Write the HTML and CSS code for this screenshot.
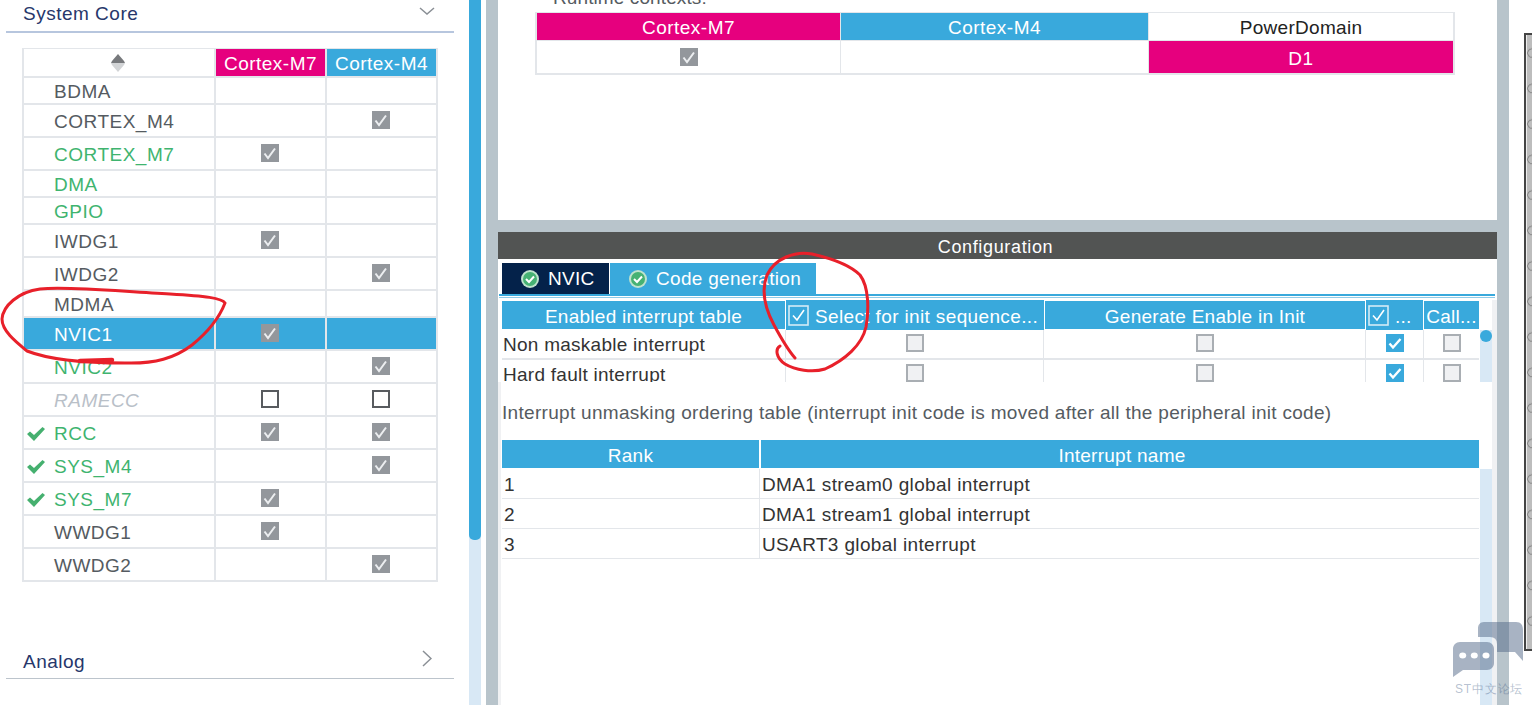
FILE: index.html
```html
<!DOCTYPE html>
<html lang="en">
<head>
  <meta charset="UTF-8">
  <title>Configuration</title>
  <link rel="stylesheet" href="styles.css">
</head>
<body>

  <div id="left-pane">
    <div class="section-head">
      <span>System Core</span>
      <svg class="chevron-down" viewBox="0 0 16 8"><polyline points="1,1 8,7 15,1"/></svg>
    </div>

    <div class="ip-table">
      <div class="cell sort-cell">
        <svg class="sort-icon" viewBox="0 0 14 18"><path class="sort-up" d="M7 0 L13 7 L14 9 L0 9 L1 7 Z"/><path class="sort-down" d="M0 9 L14 9 L13 11 L7 18 L1 11 Z"/></svg>
      </div>
      <div class="cell head-pink">Cortex-M7</div>
      <div class="cell head-blue">Cortex-M4</div>

      <div class="cell name"><i class="slot"></i>BDMA</div><div class="cell"></div><div class="cell"></div>

      <div class="cell name"><i class="slot"></i>CORTEX_M4</div><div class="cell"></div>
      <div class="cell"><svg class="box"><use href="#box-grey"/></svg></div>

      <div class="cell name green"><i class="slot"></i>CORTEX_M7</div>
      <div class="cell"><svg class="box"><use href="#box-grey"/></svg></div><div class="cell"></div>

      <div class="cell name green"><i class="slot"></i>DMA</div><div class="cell"></div><div class="cell"></div>
      <div class="cell name green"><i class="slot"></i>GPIO</div><div class="cell"></div><div class="cell"></div>

      <div class="cell name"><i class="slot"></i>IWDG1</div>
      <div class="cell"><svg class="box"><use href="#box-grey"/></svg></div><div class="cell"></div>

      <div class="cell name"><i class="slot"></i>IWDG2</div><div class="cell"></div>
      <div class="cell"><svg class="box"><use href="#box-grey"/></svg></div>

      <div class="cell name"><i class="slot"></i>MDMA</div><div class="cell"></div><div class="cell"></div>

      <div class="cell name selected"><i class="slot"></i>NVIC1</div>
      <div class="cell selected"><svg class="box"><use href="#box-grey"/></svg></div>
      <div class="cell selected"></div>

      <div class="cell name green"><i class="slot"></i>NVIC2</div><div class="cell"></div>
      <div class="cell"><svg class="box"><use href="#box-grey"/></svg></div>

      <div class="cell name disabled"><i class="slot"></i>RAMECC</div>
      <div class="cell"><i class="box-empty"></i></div>
      <div class="cell"><i class="box-empty"></i></div>

      <div class="cell name green"><i class="slot"><svg class="ok-mark"><use href="#ok"/></svg></i>RCC</div>
      <div class="cell"><svg class="box"><use href="#box-grey"/></svg></div>
      <div class="cell"><svg class="box"><use href="#box-grey"/></svg></div>

      <div class="cell name green"><i class="slot"><svg class="ok-mark"><use href="#ok"/></svg></i>SYS_M4</div>
      <div class="cell"></div>
      <div class="cell"><svg class="box"><use href="#box-grey"/></svg></div>

      <div class="cell name green"><i class="slot"><svg class="ok-mark"><use href="#ok"/></svg></i>SYS_M7</div>
      <div class="cell"><svg class="box"><use href="#box-grey"/></svg></div>
      <div class="cell"></div>

      <div class="cell name"><i class="slot"></i>WWDG1</div>
      <div class="cell"><svg class="box"><use href="#box-grey"/></svg></div><div class="cell"></div>

      <div class="cell name"><i class="slot"></i>WWDG2</div><div class="cell"></div>
      <div class="cell"><svg class="box"><use href="#box-grey"/></svg></div>
    </div>

    <div class="section-head analog">
      <span>Analog</span>
      <svg class="chevron-right" viewBox="0 0 10 17"><polyline points="1,1 9,8.5 1,16"/></svg>
    </div>
  </div>

  <div id="left-scroll"><div class="left-thumb"></div></div>
  <div class="gutter-white"></div>
  <div class="gutter-grey"></div>

  <div id="center-pane">
    <div class="top-panel">
      <div class="runtime-label"><span>Runtime contexts:</span></div>
      <div class="context-table">
        <div class="cell head-pink">Cortex-M7</div>
        <div class="cell head-blue">Cortex-M4</div>
        <div class="cell plain">PowerDomain</div>
        <div class="cell"><svg class="box"><use href="#box-grey"/></svg></div>
        <div class="cell"></div>
        <div class="cell head-pink">D1</div>
      </div>
    </div>

    <div class="splitter"></div>
    <div class="config-bar">Configuration</div>

    <div class="tabs">
      <div class="tab tab-active"><svg class="tab-icon"><use href="#tab-ok"/></svg>NVIC</div>
      <div class="tab"><svg class="tab-icon"><use href="#tab-ok"/></svg>Code generation</div>
    </div>
    <div class="tab-rule"></div>

    <div class="config-body">
      <div class="nvic-head">
        <div class="th">Enabled interrupt table</div>
        <div class="th th-tall th-select"><svg class="head-box"><use href="#box-head"/></svg>Select for init sequence...</div>
        <div class="th">Generate Enable in Init</div>
        <div class="th th-tall"><svg class="head-box"><use href="#box-head"/></svg>...</div>
        <div class="th">Call...</div>
      </div>

      <div class="nvic-wrap">
        <div class="nvic-rows">
          <div class="td td-text">Non maskable interrupt</div>
          <div class="td"><i class="box-off"></i></div>
          <div class="td"><i class="box-off"></i></div>
          <div class="td"><svg class="box"><use href="#box-blue"/></svg></div>
          <div class="td"><i class="box-off"></i></div>

          <div class="td td-text">Hard fault interrupt</div>
          <div class="td"><i class="box-off"></i></div>
          <div class="td"><i class="box-off"></i></div>
          <div class="td"><svg class="box"><use href="#box-blue"/></svg></div>
          <div class="td"><i class="box-off"></i></div>
        </div>
        <div class="nvic-scroll"><div class="nvic-thumb"></div></div>
      </div>

      <div class="lower">
        <p class="order-title">Interrupt unmasking ordering table (interrupt init code is moved after all the peripheral init code)</p>
        <div class="rank-head">
          <div class="th">Rank</div>
          <div class="th">Interrupt name</div>
        </div>
        <div class="rank-wrap">
          <div class="rank-rows">
            <div class="td td-text">1</div><div class="td td-text">DMA1 stream0 global interrupt</div>
            <div class="td td-text">2</div><div class="td td-text">DMA1 stream1 global interrupt</div>
            <div class="td td-text">3</div><div class="td td-text">USART3 global interrupt</div>
          </div>
          <div class="rank-scroll"></div>
        </div>
      </div>
    </div>
  </div>

  <div class="gutter-grey right"></div>
  <div class="gutter-gap"></div>
  <div class="side-strip"></div>

  <!-- hand drawn marks on top of the screenshot -->
  <svg class="scribble" viewBox="0 0 1532 705">
    <path d="M225 303 C222 298 205 296 170 294 C125 292 70 286 40 289 C18 292 3 306 2 319 C2 331 16 342 27 351 C50 360 85 363 125 363 C155 364 175 358 192 345 C208 332 220 316 225 303"/>
    <path class="thick" d="M80 361 L112 360"/>
    <path d="M795 358 C788 350 781 338 774 325 C766 310 760 293 767 275 C775 258 795 251 812 254 C830 258 850 265 860 275 C869 287 869 310 866 327 C862 345 845 360 825 369 C812 373 795 370 785 364 C776 358 775 349 780 346"/>
  </svg>

  <div class="watermark">
    <svg class="bubbles" viewBox="0 0 71 56">
      <path class="bubble" d="M31 0 L63 0 C68 0 70 3 70 8 L70 39 L62 30 L44 30 L44 22 Q44 15 37 15 L25 15 L25 6 C25 3 27 0 31 0 Z"/>
      <path class="bubble" d="M7 20 L34 20 C38 20 41 23 41 27 L41 41 C41 45 38 48 34 48 L10 48 L0 55 L0 27 C0 23 3 20 7 20 Z"/>
      <ellipse class="dot" cx="9.700" cy="33.500" rx="3.500" ry="3"/><ellipse class="dot" cx="21.300" cy="33.500" rx="3.500" ry="3"/><ellipse class="dot" cx="33" cy="33.500" rx="3.500" ry="3"/>
    </svg>
    <span>ST中文论坛</span>
  </div>

  <svg class="sprite">
    <defs>
      <symbol id="box-grey" viewBox="0 0 18 18">
        <rect width="18" height="18" fill="#93979c"/>
        <polyline points="3.500,9.500 7,14 14,4.500" fill="none" stroke="#eceef0" stroke-width="2"/>
      </symbol>
      <symbol id="box-blue" viewBox="0 0 18 18">
        <rect width="18" height="18" fill="#39a9dc"/>
        <polyline points="3.500,9.500 7,13.500 14.500,5" fill="none" stroke="#fff" stroke-width="2.400"/>
      </symbol>
      <symbol id="box-head" viewBox="0 0 21 21">
        <rect x="1" y="1" width="19" height="19" fill="none" stroke="#d4ecf7" stroke-width="1.600"/>
        <polyline points="5,10.500 9,15 16,5" fill="none" stroke="#fff" stroke-width="1.600"/>
      </symbol>
      <symbol id="ok" viewBox="0 0 18 14">
        <path d="M0 7 L3 4.500 L7 8 L15.500 0 L18 2 L7 14 Z" fill="#45b06f"/>
      </symbol>
      <symbol id="tab-ok" viewBox="0 0 18 18">
        <circle cx="9" cy="9" r="9" fill="#bfe3cc"/>
        <circle cx="9" cy="9" r="7" fill="#46b273"/>
        <polyline points="5,9 8,12 13,6.500" fill="none" stroke="#fff" stroke-width="2"/>
      </symbol>
    </defs>
  </svg>

</body>
</html>
```

FILE: styles.css
```css
* {
  margin: 0;
  padding: 0;
  box-sizing: border-box;
}

body {
  width: 1532px;
  height: 705px;
  display: flex;
  overflow: hidden;
  background: #fff;
  font-family: "Liberation Sans", Arial, sans-serif;
  font-size: 19px;
  letter-spacing: .5px;
  color: #555b61;
}

/* left pane */

#left-pane {
  width: 469px;
  height: 705px;
  flex: none;
}

.section-head {
  width: 448px;
  height: 33px;
  margin-left: 6px;
  padding: 0 19px 3px 17px;
  display: flex;
  justify-content: space-between;
  align-items: center;
  border-bottom: 2px solid #b7c6de;
  color: #27376b;
}

.section-head.analog {
  height: 34px;
  margin-top: 63px;
  padding-bottom: 0;
  border-bottom: 1px solid #bcc4cc;
}

.chevron-down {
  width: 16px;
  height: 8px;
  margin-bottom: 6px;
  fill: none;
  stroke: #8a8f95;
  stroke-width: 1.500;
}

.chevron-right {
  width: 10px;
  height: 17px;
  margin: 0 3px 7px 0;
  fill: none;
  stroke: #8a8f95;
  stroke-width: 1.500;
}

.ip-table {
  width: 416px;
  margin: 15px 0 0 22px;
  padding: 1px 2px 2px;
  display: grid;
  grid-template-columns: 190px 109px 109px;
  grid-template-rows: 27px 25px 31px 31px 25px 25px 31px 31px 25px repeat(8, 31px);
  gap: 2px;
  background: #e3e6ea;
}

.cell {
  display: flex;
  justify-content: center;
  align-items: center;
  background: #fff;
}

.head-pink,
.head-blue {
  padding-top: 3px;
  color: #fff;
}

.head-pink {
  background: #e6007e;
}

.head-blue {
  background: #39a9dc;
}

.sort-icon {
  width: 14px;
  height: 18px;
  margin-right: 2px;
}

.sort-up {
  fill: #77797c;
}

.sort-down {
  fill: #d2d4d6;
}

.name {
  justify-content: flex-start;
  padding: 2px 0 0 3px;
}

.green {
  color: #3fb46f;
}

.disabled {
  color: #b9c0c8;
  font-style: italic;
}

.selected {
  background: #39a9dc;
  color: #fff;
}

.slot {
  width: 27px;
  display: flex;
  flex: none;
}

.ok-mark {
  width: 18px;
  height: 14px;
}

.box {
  width: 18px;
  height: 18px;
  display: block;
}

.box-empty {
  width: 18px;
  height: 18px;
  display: block;
  background: #fff;
  border: 2px solid #585b5f;
}

.ip-table .box,
.ip-table .box-empty {
  margin: 0 1px 1px 0;
}

/* scrollbars and gutters */

#left-scroll {
  width: 12px;
  flex: none;
  background: #d8e8f5;
}

.left-thumb {
  height: 540px;
  background: #39a9dc;
  border-radius: 0 0 5px 5px;
}

.gutter-white {
  width: 5px;
  flex: none;
}

.gutter-grey {
  width: 12px;
  flex: none;
  background: #b8c4cb;
}

.gutter-gap {
  width: 15px;
  flex: none;
}

.side-strip {
  width: 8px;
  height: 618px;
  margin-top: 33px;
  flex: none;
  border: 2px solid #444;
  border-right: none;
  background: radial-gradient(circle at 6px 18px, transparent 3.500px, #888 4px, #888 4.500px, transparent 5px) 0 0 / 8px 35.500px #bdbdbd;
  box-shadow: inset 1px 0 #eee;
}

/* center pane */

#center-pane {
  width: 999px;
  height: 705px;
  flex: none;
  overflow: hidden;
}

.top-panel {
  height: 220px;
}

.runtime-label {
  height: 12px;
  padding-left: 55px;
  line-height: 18px;
  letter-spacing: .1px;
  overflow: hidden;
}

.runtime-label span {
  display: block;
  margin-top: -11px;
}

.context-table {
  width: 920px;
  margin-left: 37px;
  padding: 1px 2px 2px;
  display: grid;
  grid-template-columns: 303px 307px 304px;
  grid-template-rows: 27px 32px;
  gap: 1px;
  background: #e3e6ea;
}

.plain {
  padding-top: 3px;
  color: #222;
  letter-spacing: .3px;
}

.splitter {
  height: 12px;
  background: #b8c4cb;
}

.config-bar {
  height: 27px;
  padding: 3px 4px 0 0;
  display: flex;
  justify-content: center;
  align-items: center;
  background: #525453;
  color: #fff;
  font-size: 18px;
  letter-spacing: .65px;
}

.tabs {
  height: 31px;
  margin-top: 4px;
  padding-left: 4px;
  display: flex;
  gap: 1px;
  letter-spacing: .3px;
}

.tab {
  display: flex;
  align-items: center;
  gap: 9px;
  width: 206px;
  padding-left: 19px;
  background: #39a9dc;
  color: #fff;
}

.tab-active {
  width: 107px;
  background: #04224a;
}

.tab-icon {
  width: 18px;
  height: 18px;
}

.tab-rule {
  width: 996px;
  height: 4px;
  margin-left: 1px;
  border-top: 2px solid #39a9dc;
  border-bottom: 1px solid #8fcbe8;
}

.config-body {
  margin-top: 2px;
  border-right: 5px solid #f0f1f3;
  letter-spacing: .26px;
}

.nvic-head {
  height: 30px;
  margin-left: 4px;
  display: grid;
  grid-template-columns: 283px 258px 320px 57px 55px;
  column-gap: 1px;
}

.th {
  margin: 1px 0;
  padding-top: 3px;
  display: flex;
  justify-content: center;
  align-items: center;
  background: #39a9dc;
  color: #fff;
  white-space: nowrap;
  overflow: hidden;
}

.th-tall {
  margin: 0;
  padding: 3px 0 0 2px;
  justify-content: flex-start;
  gap: 6px;
}

.th-select {
  letter-spacing: .36px;
}

.head-box {
  width: 21px;
  height: 21px;
  margin-bottom: 3px;
  flex: none;
}

.nvic-wrap {
  height: 52px;
  margin-left: 4px;
  display: flex;
  overflow: hidden;
}

.nvic-rows {
  display: grid;
  grid-template-columns: 283px 257px 321px 57px 55px;
  grid-auto-rows: 28px;
  column-gap: 1px;
  row-gap: 2px;
  height: 58px;
  background: #e3e6ea;
}

.td {
  padding-bottom: 2px;
  display: flex;
  justify-content: center;
  align-items: center;
  background: #fff;
  color: #333;
}

.td-text {
  padding: 1px 0 0 1px;
  justify-content: flex-start;
  white-space: nowrap;
}

.box-off {
  width: 18px;
  height: 18px;
  display: block;
  background: #f0f1f3;
  border: 2px solid #a9aeb3;
}

.nvic-scroll {
  width: 12px;
  margin-left: 1px;
  background: #d8e8f5;
}

.nvic-thumb {
  width: 12px;
  height: 12px;
  border-radius: 50%;
  background: #39a9dc;
}

.lower {
  height: 323px;
  padding-left: 1px;
  border-left: 3px solid #f0f1f3;
}

.order-title {
  height: 58px;
  padding-top: 20px;
  line-height: 22px;
  letter-spacing: .3px;
  color: #555b61;
  white-space: nowrap;
}

.rank-head {
  height: 28px;
  display: grid;
  grid-template-columns: 257px 718px;
  column-gap: 2px;
}

.rank-head .th {
  margin: 0;
}

.rank-head .th + .th {
  padding-left: 4px;
}

.rank-wrap {
  margin-top: 1px;
  display: flex;
  align-items: flex-start;
}

.rank-rows {
  width: 977px;
  display: grid;
  grid-template-columns: 257px 719px;
  grid-auto-rows: 29px;
  column-gap: 1px;
  row-gap: 1px;
  padding-bottom: 1px;
  background: #e3e6ea;
  letter-spacing: .36px;
}

.rank-rows .td {
  padding: 2px 0 0 2px;
}

.rank-scroll {
  width: 12px;
  height: 240px;
  margin-left: 1px;
  background: #d8e8f5;
}

/* overlays */

.scribble {
  position: absolute;
  top: 0;
  left: 0;
  width: 1532px;
  height: 705px;
  fill: none;
  stroke: #e8202a;
  stroke-width: 3;
  stroke-linecap: round;
}

.scribble .thick {
  stroke-width: 4.500;
}

.watermark {
  position: absolute;
  top: 622px;
  left: 1453px;
  width: 72px;
}

.bubbles {
  width: 71px;
  height: 56px;
  display: block;
}

.bubble {
  fill: rgba(81, 103, 135, .5);
}

.dot {
  fill: #fff;
}

.watermark span {
  display: block;
  margin: 3px 0 0 2px;
  color: rgba(70, 95, 135, .4);
  font-size: 12px;
  letter-spacing: .8px;
  white-space: nowrap;
}

.sprite {
  width: 0;
  height: 0;
  position: absolute;
}
```
